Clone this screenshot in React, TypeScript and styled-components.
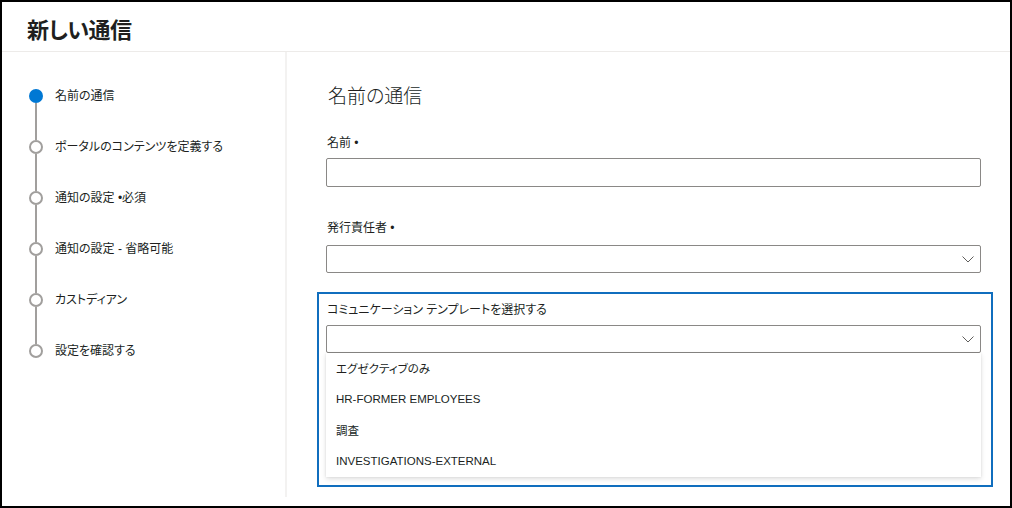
import React from "react";
import styled, { createGlobalStyle } from "styled-components";

const GlobalStyle = createGlobalStyle`
  html, body { margin: 0; padding: 0; background: #fff; }
  body {
    font-family: "Liberation Sans", "Noto Sans CJK JP", sans-serif;
    font-feature-settings: "palt" 1;
    color: #201f1e;
  }
  * { box-sizing: border-box; }
`;

const Frame = styled.div`
  width: 1012px;
  height: 508px;
  border: 2px solid #000;
  display: flex;
  flex-direction: column;
  background: #fff;
  overflow: hidden;
`;

const Header = styled.header`
  height: 50px;
  flex: none;
  display: flex;
  align-items: center;
  padding: 2px 0 0 25px;
  border-bottom: 1px solid #edebe9;
`;

const Title = styled.h1`
  margin: 0;
  font-size: 22px;
  font-weight: 600;
  color: #201f1e;
  letter-spacing: -0.5px;
`;

const Body = styled.div`
  flex: 1;
  display: flex;
  min-height: 0;
`;

const Nav = styled.nav`
  width: 285px;
  flex: none;
  margin-bottom: 9px;
  border-right: 2px solid #f3f2f1;
  padding: 37px 0 0 27px;
  display: flex;
  flex-direction: column;
`;

const Step = styled.div`
  display: grid;
  grid-template-columns: 14px 1fr;
  column-gap: 12px;
  align-items: center;
`;

const Dot = styled.span<{ $active?: boolean }>`
  width: 14px;
  height: 14px;
  border-radius: 50%;
  background: ${(p) => (p.$active ? "#0078d4" : "#fff")};
  border: ${(p) => (p.$active ? "none" : "2px solid #a19f9d")};
`;

const StepLabel = styled.span`
  font-size: 12px;
  line-height: 14px;
  color: #201f1e;
`;

const Connector = styled.span`
  width: 2px;
  height: 37px;
  margin-left: 6px;
  background: #a19f9d;
`;

const Content = styled.main`
  flex: 1;
  padding: 33px 29px 0 39px;
  display: flex;
  flex-direction: column;
`;

const Heading = styled.h2`
  margin: 0 0 26px 2px;
  font-size: 19px;
  line-height: 24px;
  font-weight: 300;
  color: #201f1e;
`;

const Field = styled.div<{ $gap?: number }>`
  display: flex;
  flex-direction: column;
  margin-bottom: ${(p) => p.$gap ?? 33}px;
`;

const Label = styled.label<{ $gap?: number }>`
  font-size: 12px;
  line-height: 16px;
  color: #201f1e;
  margin: 0 0 ${(p) => p.$gap ?? 7}px 1px;
`;

const TextBox = styled.div`
  height: 29px;
  border: 1px solid #8a8886;
  border-radius: 2px;
  background: #fff;
`;

const Select = styled.div`
  height: 28px;
  border: 1px solid #8a8886;
  border-radius: 2px;
  background: #fff;
  display: flex;
  align-items: center;
  justify-content: flex-end;
  padding-right: 6px;
`;

const Highlight = styled.section`
  margin: 0 -12px 0 -9px;
  border: 2px solid #106ebe;
  padding: 8px 10px 8px 7px;
  display: flex;
  flex-direction: column;
`;

const List = styled.ul`
  list-style: none;
  margin: 0;
  padding: 0;
  background: #fff;
  box-shadow: 0 2px 5px rgba(0, 0, 0, 0.13), 0 0 2px rgba(0, 0, 0, 0.08);
`;

const Item = styled.li`
  height: 31px;
  padding: 0 0 2px 10px;
  display: flex;
  align-items: center;
  font-size: 11.5px;
  color: #201f1e;
`;

const Chevron = () => (
  <svg width="12" height="7" viewBox="0 0 12 7" aria-hidden>
    <polyline points="0.5,0.5 6,6 11.5,0.5" fill="none" stroke="#605e5c" strokeWidth="1" />
  </svg>
);

const steps = [
  "名前の通信",
  "ポータルのコンテンツを定義する",
  "通知の設定 •必須",
  "通知の設定 - 省略可能",
  "カストディアン",
  "設定を確認する",
];

const templates = [
  "エグゼクティブのみ",
  "HR-FORMER EMPLOYEES",
  "調査",
  "INVESTIGATIONS-EXTERNAL",
];

export default function App() {
  return (
    <>
      <GlobalStyle />
      <Frame>
        <Header>
          <Title>新しい通信</Title>
        </Header>
        <Body>
          <Nav>
            {steps.map((s, i) => (
              <React.Fragment key={s}>
                <Step>
                  <Dot $active={i === 0} />
                  <StepLabel>{s}</StepLabel>
                </Step>
                {i < steps.length - 1 && <Connector />}
              </React.Fragment>
            ))}
          </Nav>
          <Content>
            <Heading>名前の通信</Heading>
            <Field>
              <Label>名前 •</Label>
              <TextBox />
            </Field>
            <Field $gap={19}>
              <Label $gap={9}>発行責任者 •</Label>
              <Select>
                <Chevron />
              </Select>
            </Field>
            <Highlight>
              <Label>コミュニケーション テンプレートを選択する</Label>
              <Select>
                <Chevron />
              </Select>
              <List>
                {templates.map((t) => (
                  <Item key={t}>{t}</Item>
                ))}
              </List>
            </Highlight>
          </Content>
        </Body>
      </Frame>
    </>
  );
}
